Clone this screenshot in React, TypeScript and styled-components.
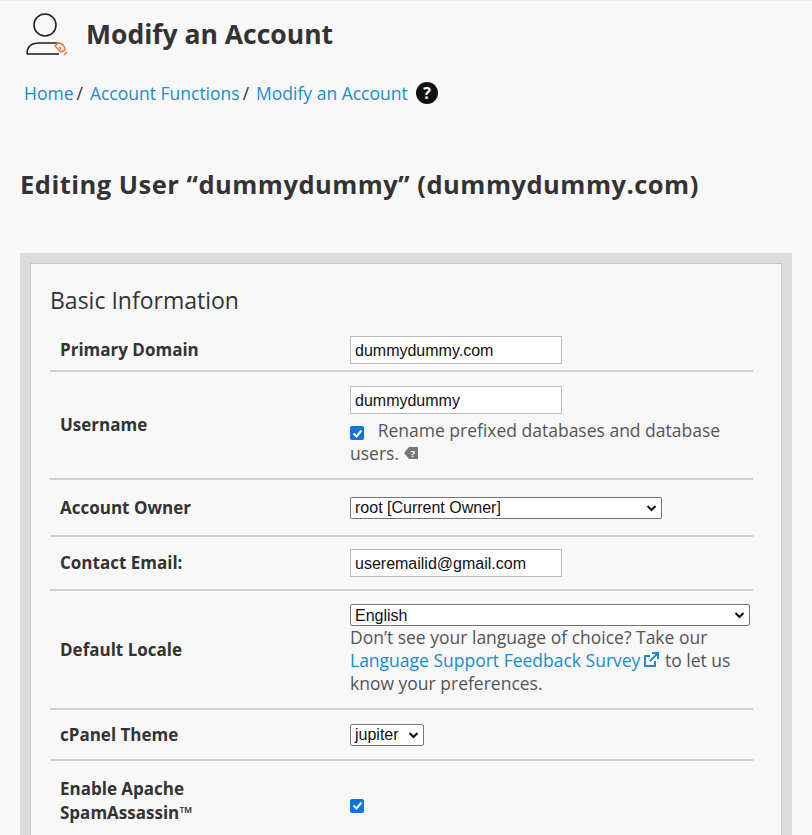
import React from 'react';
import styled, { createGlobalStyle } from 'styled-components';

const Global = createGlobalStyle`
  html, body { margin: 0; background: #f8f8f8; font-family: "Open Sans", sans-serif; color: #333; }
`;

const Page = styled.div`
  padding: 0 20px;
  height: 835px;
  overflow: hidden;
  border-top: 1px solid #eee;
`;

const Header = styled.div`
  display: flex;
  align-items: center;
  gap: 14px;
  padding: 10px 0 0 4px;
  height: 46px;
`;

const Title = styled.h1`
  margin: 0;
  font-size: 26.5px;
  font-weight: 700;
  color: #333;
`;

const Crumbs = styled.div`
  display: flex;
  align-items: center;
  margin: 24px 0 0 4px;
  font-size: 17.5px;
  color: #333;
`;

const Crumb = styled.a`
  color: #1a8bcf;
  text-decoration: none;
`;

const Sep = styled.span`
  margin: 0 7px 0 3px;
`;

const Heading = styled.h2`
  margin: 62px 0 0;
  font-size: 25.5px;
  font-weight: 700;
  letter-spacing: 0.5px;
  color: #333;
`;

const Outer = styled.div`
  margin-top: 52px;
  background: #dcdcdc;
  padding: 10px 10px 0;
`;

const Panel = styled.div`
  background: #f8f8f8;
  border: 1px solid #c8c8c8;
  border-bottom: none;
  padding: 20px 28px 0 19px;
`;

const PanelTitle = styled.div`
  font-size: 23px;
  color: #333;
  margin-bottom: 14px;
`;

const Row = styled.div<{ h: number }>`
  display: grid;
  grid-template-columns: 300px 1fr;
  align-items: center;
  min-height: ${p => p.h}px;
  border-bottom: 2px solid #cfcfcf;
  &:last-child { border-bottom: none; align-items: start; padding-top: 16px; }
`;

const Label = styled.div`
  font-weight: 700;
  font-size: 17px;
  padding-left: 10px;
  line-height: 24px;
  max-width: 170px;
`;

const Value = styled.div`
  font-size: 17.5px;
  color: #555;
  line-height: 23px;
`;

const TextBox = styled.div`
  width: 212px;
  height: 28px;
  box-sizing: border-box;
  border: 1px solid #bbb;
  background: #fff;
  padding: 0 4px;
  font-family: "Liberation Sans", Arial, sans-serif;
  font-size: 16px;
  color: #111;
  line-height: 27px;
`;

const Select = styled.div<{ w: number }>`
  width: ${p => p.w}px;
  height: 22px;
  box-sizing: border-box;
  border: 1px solid #767676;
  border-radius: 2px;
  background: #fff;
  padding: 0 4px;
  display: flex;
  align-items: center;
  justify-content: space-between;
  font-family: "Liberation Sans", Arial, sans-serif;
  font-size: 16px;
  color: #111;
`;

const Check = styled.span`
  display: inline-flex;
  align-items: center;
  justify-content: center;
  width: 14px;
  height: 14px;
  border-radius: 2px;
  background: #0a74e0;
  vertical-align: -1px;
`;

const Link = styled.a`
  color: #1a8bcf;
  text-decoration: none;
`;

const Chevron = () => (
  <svg width="11" height="8" viewBox="0 0 11 8"><path d="M1.5 2l4 4 4-4" fill="none" stroke="#111" strokeWidth="2" /></svg>
);

const Tick = () => (
  <Check><svg width="11" height="9" viewBox="0 0 11 9"><path d="M1.5 4.5l3 3 5-6" fill="none" stroke="#fff" strokeWidth="2" /></svg></Check>
);

export default function App() {
  return (
    <Page>
      <Global />
      <Header>
        <svg width="48" height="48" viewBox="0 0 48 48">
          <circle cx="21" cy="15" r="11" fill="none" stroke="#222" strokeWidth="1.6" />
          <path d="M3 44c0-8 5-11 12-11h18" fill="none" stroke="#222" strokeWidth="1.6" />
          <path d="M3 44h32" fill="none" stroke="#222" strokeWidth="1.6" />
          <path d="M37 42l-6-6 3-3 c4 0 7 3 7 7z M35 37l2 2 M40 45l3-3" fill="none" stroke="#f26b2e" strokeWidth="1.4" />
        </svg>
        <Title>Modify an Account</Title>
      </Header>
      <Crumbs>
        <Crumb>Home</Crumb><Sep>/</Sep>
        <Crumb>Account Functions</Crumb><Sep>/</Sep>
        <Crumb>Modify an Account</Crumb>
        <svg width="22" height="22" viewBox="0 0 22 22" style={{ marginLeft: 8 }}>
          <circle cx="11" cy="11" r="11" fill="#111" />
          <text x="11" y="16.5" textAnchor="middle" fontSize="16" fontWeight="700" fill="#fff" fontFamily="Open Sans">?</text>
        </svg>
      </Crumbs>
      <Heading>Editing User “dummydummy” (dummydummy.com)</Heading>
      <Outer>
        <Panel>
          <PanelTitle>Basic Information</PanelTitle>
          <Row h={40}><Label>Primary Domain</Label><Value><TextBox>dummydummy.com</TextBox></Value></Row>
          <Row h={106}>
            <Label>Username</Label>
            <Value>
              <TextBox>dummydummy</TextBox>
              <div style={{ marginTop: 5 }}>
                <Tick />&nbsp;&nbsp; Rename prefixed databases and database users.{' '}
                <svg width="14" height="14" viewBox="0 0 14 14"><path d="M0 7l5-6h9v12H5z" fill="#777" /><text x="9" y="11" textAnchor="middle" fontSize="9" fill="#fff" fontWeight="700">?</text></svg>
              </div>
            </Value>
          </Row>
          <Row h={55}><Label>Account Owner</Label><Value><Select w={312}>root [Current Owner]<Chevron /></Select></Value></Row>
          <Row h={52}><Label>Contact Email:</Label><Value><TextBox>useremailid@gmail.com</TextBox></Value></Row>
          <Row h={117}>
            <Label>Default Locale</Label>
            <Value>
              <Select w={400}>English<Chevron /></Select>
              Don’t see your language of choice? Take our <Link>Language Support Feedback Survey</Link>
              <svg width="18" height="18" viewBox="0 0 18 18" style={{ verticalAlign: -2, marginLeft: 2 }}><path d="M13 10v5H3V5h5 M10 2h6v6 M16 2L8 10" fill="none" stroke="#1a8bcf" strokeWidth="2" /></svg>
              {' '}to let us know your preferences.
            </Value>
          </Row>
          <Row h={49}><Label>cPanel Theme</Label><Value><Select w={74}>jupiter<Chevron /></Select></Value></Row>
          <Row h={80}><Label>Enable Apache SpamAssassin™</Label><Value style={{ paddingTop: 14 }}><Tick /></Value></Row>
        </Panel>
      </Outer>
    </Page>
  );
}
